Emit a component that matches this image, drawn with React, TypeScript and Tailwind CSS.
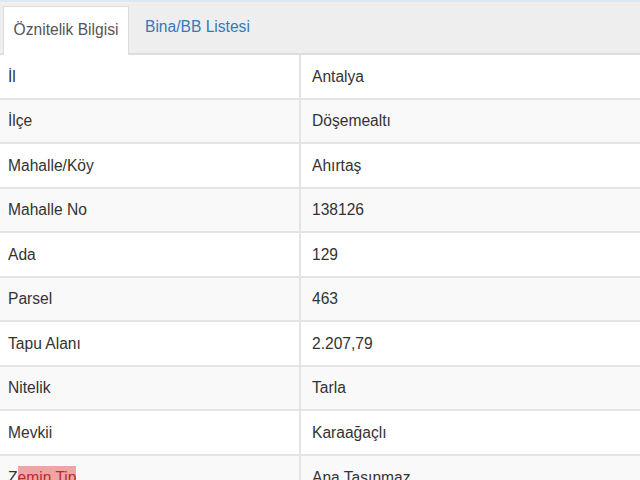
const rows: [string, string][] = [
  ['İl', 'Antalya'],
  ['İlçe', 'Döşemealtı'],
  ['Mahalle/Köy', 'Ahırtaş'],
  ['Mahalle No', '138126'],
  ['Ada', '129'],
  ['Parsel', '463'],
  ['Tapu Alanı', '2.207,79'],
  ['Nitelik', 'Tarla'],
  ['Mevkii', 'Karaağaçlı'],
]

const App = () => {
  return (
    <div className="w-[640px] h-[480px] overflow-hidden bg-white text-[15.6px] text-[#333] font-['Liberation_Sans',Arial,sans-serif]">
      <div className="h-[2px] bg-[#dbe9f5]" />
      <div className="h-[2px] bg-[#f7eee8]" />
      <div className="flex h-[51px] items-end bg-[#eeeeee] border-b-2 border-[#dddddd] pl-[3px]">
        <div className="h-[49px] w-[126px] -mb-[2px] pb-[2px] flex items-center justify-center bg-white border border-b-0 border-[#dddddd] text-[#555]">
          Öznitelik Bilgisi
        </div>
        <div className="h-[49px] pl-[16px] pb-[4px] flex items-center text-[#337ab7]">Bina/BB Listesi</div>
      </div>
      <div className="flex flex-col">
        {rows.map((r, i) => (
          <div
            key={i}
            className={`flex h-[44.5px] border-b-2 border-[#e4e4e4] ${i % 2 === 1 ? 'bg-[#f9f9f9]' : 'bg-white'}`}
          >
            <div className="w-[301px] shrink-0 pl-[8px] flex items-center border-r-2 border-[#e4e4e4]">{r[0]}</div>
            <div className="pl-[11px] flex items-center">{r[1]}</div>
          </div>
        ))}
        <div className="flex h-[44px] bg-[#f9f9f9]">
          <div className="w-[301px] shrink-0 pl-[8px] flex items-center border-r-2 border-[#e4e4e4]">
            <span>Z</span>
            <span className="bg-[#f2a3a3] text-[#b03030]">emin Tip</span>
          </div>
          <div className="pl-[11px] flex items-center">Ana Taşınmaz</div>
        </div>
      </div>
    </div>
  )
}

export default App
